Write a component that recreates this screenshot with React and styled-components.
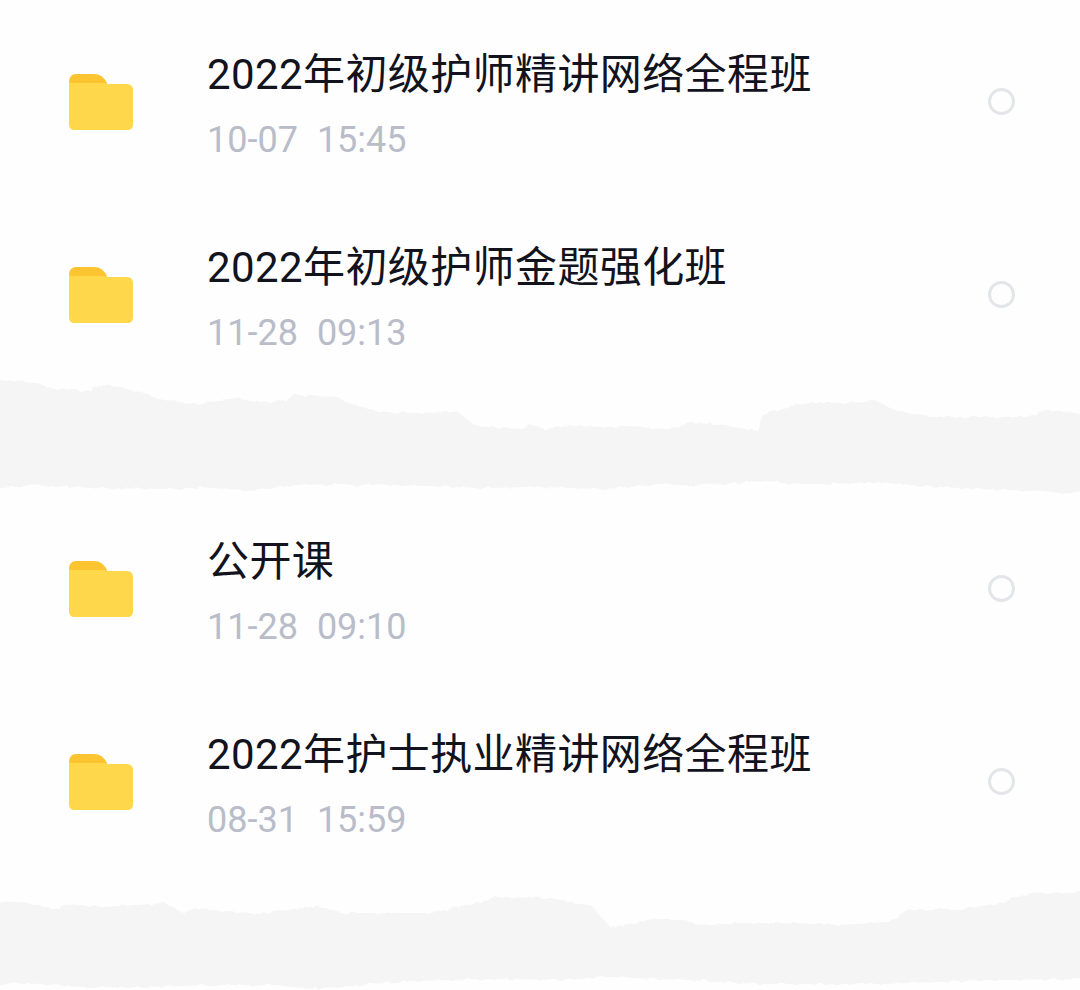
import styled, { createGlobalStyle } from "styled-components";

const files = [
  [
    { name: "2022年初级护师精讲网络全程班", date: "10-07", time: "15:45" },
    { name: "2022年初级护师金题强化班", date: "11-28", time: "09:13" },
  ],
  [
    { name: "公开课", date: "11-28", time: "09:10" },
    { name: "2022年护士执业精讲网络全程班", date: "08-31", time: "15:59" },
  ],
];

// torn paper edges, traced from the picture
const tears = [
  {
    height: 118,
    top: -11,
    points:
      "-10,0 0,0 34,3 58,10 76,9 83,13 103,4 145,13 158,19 200,25 207,21 238,18 255,22 286,21 293,15 338,17 348,23 379,32 413,33 458,32 475,46 523,49 530,45 544,49 572,46 627,47 668,49 689,42 709,43 758,51 764,35 782,28 809,22 847,23 875,21 902,32 937,37 992,37 1026,37 1047,30 1080,34 1090,34 1090,112 1080,112 1054,113 1033,111 937,107 881,103 806,104 764,101 689,106 661,104 606,109 537,107 482,108 372,104 358,107 341,104 296,105 251,111 200,107 186,109 90,108 41,105 0,108 -10,108",
  },
  {
    height: 100,
    top: 12,
    points:
      "-10,12 0,12 17,12 59,19 69,14 103,17 165,13 183,23 193,19 227,21 258,24 317,16 344,23 434,23 496,7 551,8 592,16 610,37 661,29 682,29 702,36 740,33 792,33 840,35 888,32 909,19 964,19 999,13 1030,3 1080,2 1090,2 1090,89 1080,89 992,90 881,94 758,94 689,90 606,87 565,90 496,89 413,91 344,96 310,99 275,95 207,95 152,97 76,97 28,93 0,94 -10,94",
  },
];

function Folder() {
  return (
    <svg width="66" height="58" viewBox="0 0 66 58" aria-hidden="true">
      <path
        d="M1 8 C1 3 4 0 8 0 H26 C32 0 35 3 38 7 L40 12 H2 Z"
        fill="#fcc430"
      />
      <path
        d="M1 10 C1 9 2 9 3 9 H37 C38 10 39 10 41 10 H59 C63 10 65 13 65 16 V50 C65 54 63 56 59 56 H7 C3 56 1 54 1 50 Z"
        fill="#ffd74a"
      />
    </svg>
  );
}

export default function App() {
  return (
    <>
      <GlobalStyle />
      <Page>
        {files.map((group, i) => (
          <section key={i}>
            {group.map((file) => (
              <Row key={file.name}>
                <IconBox>
                  <Folder />
                </IconBox>
                <Info>
                  <Title>{file.name}</Title>
                  <Stamp>
                    <span>{file.date}</span>
                    <span>{file.time}</span>
                  </Stamp>
                </Info>
                <Radio />
              </Row>
            ))}
            <TearSlot>
              <Tear
                $height={tears[i].height}
                $top={tears[i].top}
                viewBox={`0 0 1080 ${tears[i].height}`}
                aria-hidden="true"
              >
                <filter id={`rough${i}`} x="-2%" y="-10%" width="104%" height="120%">
                  <feTurbulence type="fractalNoise" baseFrequency="0.12" numOctaves="2" seed={i + 3} />
                  <feDisplacementMap in="SourceGraphic" scale="5" />
                </filter>
                <polygon points={tears[i].points} fill="#f5f5f6" filter={`url(#rough${i})`} />
              </Tear>
            </TearSlot>
          </section>
        ))}
      </Page>
    </>
  );
}

const GlobalStyle = createGlobalStyle`
  body {
    margin: 0;
    background: #fefefe;
  }
`;

const Page = styled.div`
  width: 1080px;
  height: 990px;
  overflow: hidden;
  padding-top: 5px;
  box-sizing: border-box;
  font-family: Roboto, "Noto Sans CJK SC", sans-serif;
`;

const Row = styled.div`
  height: 193px;
  display: flex;
  align-items: center;
  padding: 0 65px 0 68px;
`;

const IconBox = styled.div`
  width: 139px;
  height: 58px;
  flex: none;
  margin-top: 3px;
`;

const Info = styled.div`
  flex: 1;
  display: flex;
  flex-direction: column;
  margin-top: 5px;
`;

const Title = styled.div`
  font-size: 42px;
  line-height: 56px;
  letter-spacing: 0.4px;
  color: #12131c;
`;

const Stamp = styled.div`
  display: flex;
  gap: 19px;
  margin-top: 15px;
  font-size: 36px;
  line-height: 44px;
  color: #b9bcc9;
`;

const Radio = styled.div`
  width: 27px;
  height: 27px;
  flex: none;
  box-sizing: border-box;
  border: 3px solid #e4e5e9;
  border-radius: 50%;
`;

const TearSlot = styled.div`
  position: relative;
  height: 101px;
`;

// the band runs a little over the neighbouring rows
const Tear = styled.svg`
  position: absolute;
  left: 0;
  top: ${(props) => props.$top}px;
  display: block;
  width: 1080px;
  height: ${(props) => props.$height}px;
`;
